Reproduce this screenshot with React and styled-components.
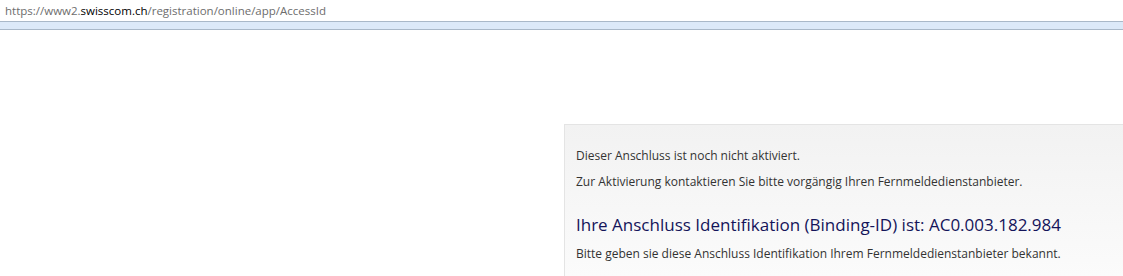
import React from "react";
import styled, { createGlobalStyle } from "styled-components";

const Global = createGlobalStyle`
  html, body { margin: 0; padding: 0; background: #ffffff; overflow: hidden; }
  body { font-family: "Open Sans", "Noto Sans", sans-serif; }
`;

const Page = styled.div`
  width: 1123px;
  height: 276px;
  display: flex;
  flex-direction: column;
`;

const UrlLine = styled.div`
  height: 21px;
  padding-left: 5px;
  font-family: "Open Sans", sans-serif;
  font-size: 11.5px;
  line-height: 21px;
  color: #6d6d6d;
  white-space: nowrap;
`;

const Host = styled.span`
  color: #000000;
`;

const Band = styled.div`
  height: 7px;
  background: #dce9f8;
  border-top: 1px solid #a9b8c8;
  border-bottom: 1px solid #a9b8c8;
`;

const Body = styled.div`
  flex: 1;
  display: flex;
  justify-content: flex-end;
  padding-top: 94px;
`;

const Panel = styled.section`
  width: 559px;
  box-sizing: border-box;
  padding: 22px 0 0 11px;
  border: 1px solid #e4e4e4;
  border-right: none;
  border-bottom: none;
  background: linear-gradient(to bottom, #f2f2f2 0%, #fbfbfb 100%);
`;

const Text = styled.p`
  margin: 0 0 ${(p) => p.$gap || 0}px;
  font-size: 12px;
  line-height: 17px;
  color: #333333;
  white-space: nowrap;
`;

const Heading = styled.h2`
  margin: 0 0 9px;
  font-weight: 400;
  font-size: 17px;
  line-height: 22px;
  color: #14145a;
  white-space: nowrap;
`;

export default function App() {
  return (
    <Page>
      <Global />
      <UrlLine>
        https://www2.<Host>swisscom.ch</Host>/registration/online/app/AccessId
      </UrlLine>
      <Band />
      <Body>
        <Panel>
          <Text $gap={9}>Dieser Anschluss ist noch nicht aktiviert.</Text>
          <Text $gap={24}>
            Zur Aktivierung kontaktieren Sie bitte vorgängig Ihren Fernmeldedienstanbieter.
          </Text>
          <Heading>Ihre Anschluss Identifikation (Binding-ID) ist: AC0.003.182.984</Heading>
          <Text>
            Bitte geben sie diese Anschluss Identifikation Ihrem Fernmeldedienstanbieter bekannt.
          </Text>
        </Panel>
      </Body>
    </Page>
  );
}
